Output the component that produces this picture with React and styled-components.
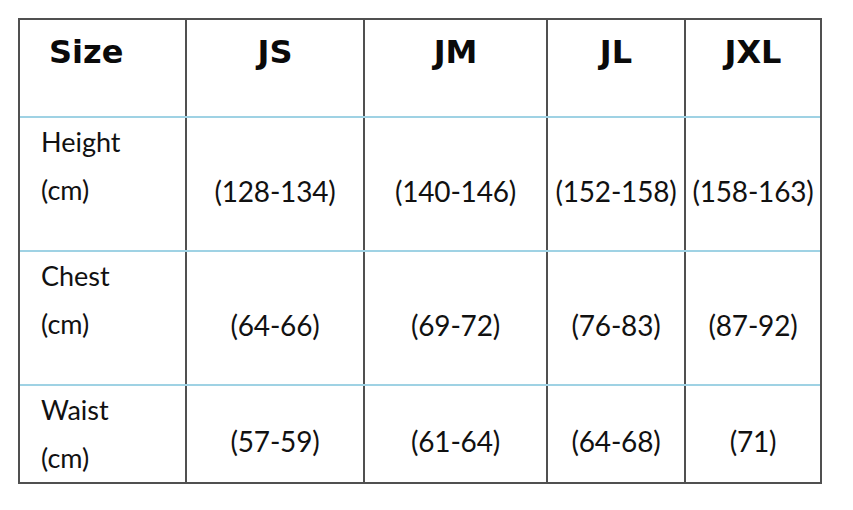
import React from "react";
import styled, { createGlobalStyle } from "styled-components";

const Global = createGlobalStyle`
  html, body { margin: 0; padding: 0; background: #ffffff; }
  body { font-family: Lato, "Open Sans", sans-serif; color: #111111; }
`;

const COLS = "167px 178px 183px 138px 134px";

const Page = styled.div`
  padding: 18px 0 0 18px;
`;

const Table = styled.div`
  display: inline-flex;
  flex-direction: column;
  border: 2px solid #505050;
  box-sizing: border-box;
`;

const Row = styled.div`
  display: grid;
  grid-template-columns: ${COLS};
  height: ${(p) => p.$h}px;
  box-sizing: border-box;
  border-bottom: ${(p) => (p.$last ? "none" : "2px solid #9fd2e4")};
`;

const Cell = styled.div`
  box-sizing: border-box;
  border-right: 2px solid #505050;
  &:last-child { border-right: none; }
`;

const HeaderCell = styled(Cell)`
  font-family: "DejaVu Sans", Lato, sans-serif;
  font-weight: 700;
  font-size: 32px;
  line-height: 40px;
  padding-top: 12px;
  text-align: ${(p) => (p.$left ? "left" : "center")};
  padding-left: ${(p) => (p.$left ? "29px" : "0")};
  color: #0a0a0a;
`;

const LabelCell = styled(Cell)`
  font-size: 27px;
  line-height: 48px;
  padding: 0 0 0 21px;
  font-weight: 400;
`;

const ValueCell = styled(Cell)`
  display: flex;
  align-items: center;
  justify-content: center;
  padding-top: 14px;
  font-size: 28px;
  font-weight: 400;
  white-space: nowrap;
  letter-spacing: -0.2px;
`;

const headers = ["JS", "JM", "JL", "JXL"];
const rows = [
  { label: "Height", values: ["(128-134)", "(140-146)", "(152-158)", "(158-163)"], h: 134 },
  { label: "Chest", values: ["(64-66)", "(69-72)", "(76-83)", "(87-92)"], h: 134 },
  { label: "Waist", values: ["(57-59)", "(61-64)", "(64-68)", "(71)"], h: 96 },
];

export default function App() {
  return (
    <Page>
      <Global />
      <Table>
        <Row $h={98}>
          <HeaderCell $left>Size</HeaderCell>
          {headers.map((h) => (
            <HeaderCell key={h}>{h}</HeaderCell>
          ))}
        </Row>
        {rows.map((r, i) => (
          <Row key={r.label} $h={r.h} $last={i === rows.length - 1}>
            <LabelCell>
              {r.label}
              <br />
              (cm)
            </LabelCell>
            {r.values.map((v, j) => (
              <ValueCell key={j}>{v}</ValueCell>
            ))}
          </Row>
        ))}
      </Table>
    </Page>
  );
}
